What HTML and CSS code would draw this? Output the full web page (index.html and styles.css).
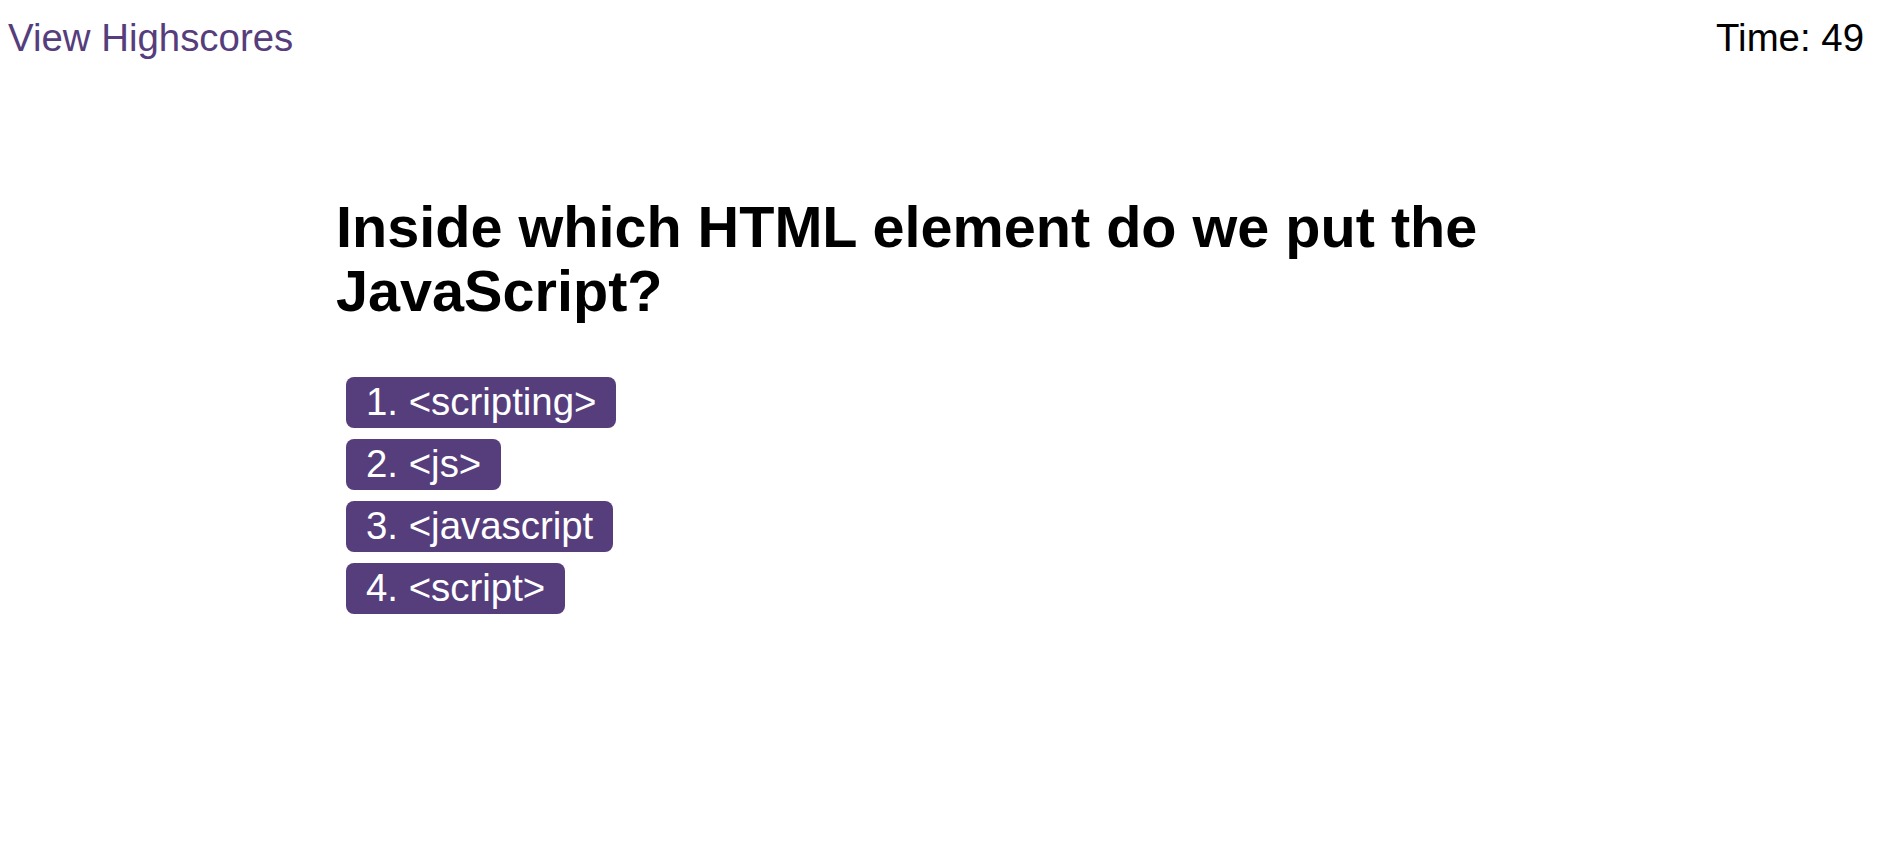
FILE: index.html
```html
<!DOCTYPE html>
<html lang="en">
<head>
<meta charset="utf-8">
<title>Code Quiz</title>
<link rel="stylesheet" href="styles.css">
</head>
<body>
<header class="topbar">
  <a class="highscores" href="#">View Highscores</a>
  <div class="timer">Time: 49</div>
</header>
<main class="quiz">
  <h1 class="question">Inside which HTML element do we put the JavaScript?</h1>
  <div class="choices">
    <button class="choice">1. &lt;scripting&gt;</button>
    <button class="choice">2. &lt;js&gt;</button>
    <button class="choice">3. &lt;javascript</button>
    <button class="choice">4. &lt;script&gt;</button>
  </div>
</main>
</body>
</html>
```
FILE: styles.css
```css
html, body {
  margin: 0;
  padding: 0;
  background: #ffffff;
}

body {
  font-family: "Liberation Sans", Arial, sans-serif;
  color: #000000;
}

.topbar {
  display: flex;
  justify-content: space-between;
  align-items: flex-start;
  padding: 16px 16px 0 8px;
  font-size: 38.4px;
  line-height: 44px;
}

.highscores {
  color: #563d7c;
  text-decoration: none;
}

.timer {
  color: #000000;
}

.quiz {
  max-width: 1208px;
  margin: 0 auto;
  padding-top: 135px;
}

.question {
  margin: 0 0 54px 0;
  font-size: 57.6px;
  line-height: 64px;
  font-weight: bold;
}

.choices {
  display: flex;
  flex-direction: column;
  align-items: flex-start;
  gap: 11px;
  padding-left: 10px;
}

.choice {
  font-family: "Liberation Sans", Arial, sans-serif;
  font-size: 38.4px;
  line-height: 44px;
  color: #ffffff;
  background: #563d7c;
  border: none;
  border-radius: 8px;
  padding: 3px 20px 4px 20px;
  margin: 0;
  cursor: pointer;
}
```
